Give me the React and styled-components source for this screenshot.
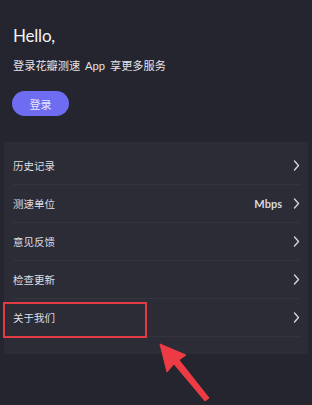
import React from 'react';
import styled, {createGlobalStyle} from 'styled-components';

const GlobalStyle = createGlobalStyle`
  html, body {
    margin: 0;
    padding: 0;
    background: #25252f;
  }
  body {
    font-family: Lato, "Noto Sans CJK SC", sans-serif;
    color: #e9e9ee;
  }
`;

const Page = styled.main`
  position: relative;
  width: 312px;
  height: 405px;
  overflow: hidden;
  background: #25252f;
`;

const Header = styled.section`
  padding: 25px 13px 0;
  display: flex;
  flex-direction: column;
  align-items: flex-start;
`;

const Title = styled.h1`
  margin: 0;
  font-size: 17px;
  font-weight: 400;
  line-height: 22px;
  letter-spacing: -0.2px;
  color: #f2f2f5;
`;

const Subtitle = styled.p`
  margin: 11px 0 0;
  font-size: 11.2px;
  line-height: 16px;
  color: #e4e4ea;
  word-spacing: 2px;
`;

const LoginButton = styled.button`
  margin: 17px 0 0 -1px;
  width: 57px;
  height: 25px;
  border: none;
  border-radius: 13px;
  background: #6e6cf0;
  color: #e8e8ff;
  font-family: "Noto Sans CJK SC", sans-serif;
  font-size: 11px;
  padding: 0;
`;

const Panel = styled.section`
  margin: 26px 4px 0;
  padding: 5px 0 17px;
  background: #2b2c36;
`;

const Row = styled.div`
  height: 38px;
  margin: 0 8px 0 9px;
  display: flex;
  align-items: center;
  border-bottom: 1px solid #33343e;
  box-sizing: border-box;
`;

const Label = styled.span`
  flex: 1;
  font-family: "Noto Sans CJK SC", sans-serif;
  font-size: 10.5px;
  color: #dedee4;
`;

const Value = styled.span`
  font-size: 11px;
  font-weight: 700;
  color: #d8d8de;
  margin-right: 11px;
`;

const Chevron = () => (
  <svg width="7" height="11" viewBox="0 0 7 11" fill="none">
    <path d="M1.5 1 L5.5 5.5 L1.5 10" stroke="#d2d2d8" strokeWidth="1.4" strokeLinecap="round" strokeLinejoin="round" />
  </svg>
);

const Highlight = styled.div`
  position: absolute;
  left: 3px;
  top: 302px;
  width: 144px;
  height: 36px;
  border: 2px solid #e43a44;
  box-sizing: border-box;
`;

const Arrow = styled.svg`
  position: absolute;
  left: 150px;
  top: 338px;
`;

const items = [
  {label: '历史记录'},
  {label: '测速单位', value: 'Mbps'},
  {label: '意见反馈'},
  {label: '检查更新'},
  {label: '关于我们'},
];

function App() {
  return (
    <Page>
      <GlobalStyle />
      <Header>
        <Title>Hello,</Title>
        <Subtitle>登录花瓣测速 App 享更多服务</Subtitle>
        <LoginButton>登录</LoginButton>
      </Header>

      <Panel>
        {items.map((item) => (
          <Row key={item.label}>
            <Label>{item.label}</Label>
            {item.value && <Value>{item.value}</Value>}
            <Chevron />
          </Row>
        ))}
      </Panel>

      <Highlight />
      <Arrow width="70" height="67" viewBox="0 0 70 67">
        <path
          d="M10 6 L36 17 L29 22 L59 60 L55 63 L24 26 L17 34 Z"
          fill="#ec3b45"
          stroke="#ec3b45"
          strokeWidth="1"
          strokeLinejoin="round"
        />
      </Arrow>
    </Page>
  );
}

export default App;
